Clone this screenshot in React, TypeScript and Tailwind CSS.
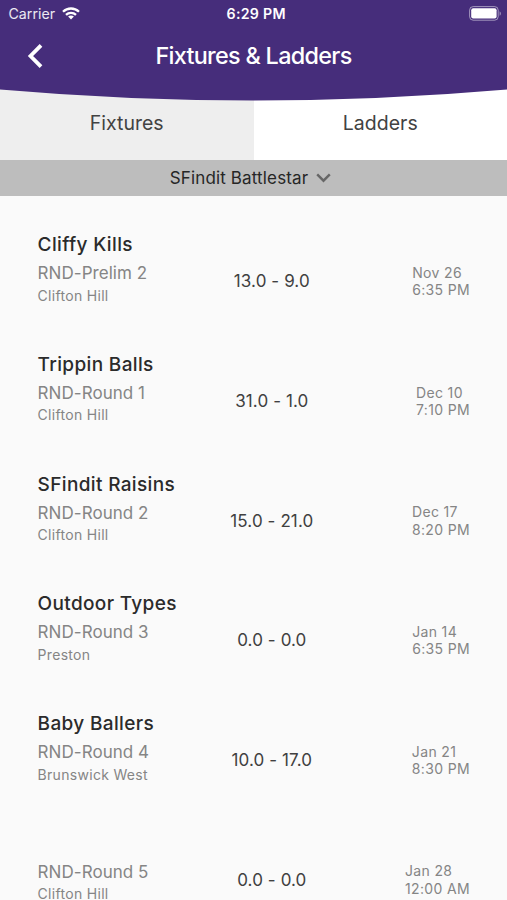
interface Fixture {
  id: number;
  team: string;
  round: string;
  venue: string;
  score: string;
  date: string;
  time: string;
}

const fixtures: Fixture[] = [
  { id: 1, team: 'Cliffy Kills', round: 'Prelim 2', venue: 'Clifton Hill', score: '13.0 - 9.0', date: 'Nov 26', time: '6:35 PM' },
  { id: 2, team: 'Trippin Balls', round: 'Round 1', venue: 'Clifton Hill', score: '31.0 - 1.0', date: 'Dec 10', time: '7:10 PM' },
  { id: 3, team: 'SFindit Raisins', round: 'Round 2', venue: 'Clifton Hill', score: '15.0 - 21.0', date: 'Dec 17', time: '8:20 PM' },
  { id: 4, team: 'Outdoor Types', round: 'Round 3', venue: 'Preston', score: '0.0 - 0.0', date: 'Jan 14', time: '6:35 PM' },
  { id: 5, team: 'Baby Ballers', round: 'Round 4', venue: 'Brunswick West', score: '10.0 - 17.0', date: 'Jan 21', time: '8:30 PM' },
  { id: 6, team: '', round: 'Round 5', venue: 'Clifton Hill', score: '0.0 - 0.0', date: 'Jan 28', time: '12:00 AM' },
];

function StatusBar() {
  return (
    <div className="grid h-7 grid-cols-3 items-center pl-[8.5px] pr-[5px] text-white">
      <div className="flex items-center gap-[7px]">
        <span className="text-[14.2px] text-white/90">Carrier</span>
        <svg className="-mt-px" width="18" height="13" viewBox="0 0 18 13" fill="none" stroke="currentColor" strokeWidth="2.3">
          <path d="M1 4.8C5.5 0.4 12.5 0.4 17 4.8" />
          <path d="M4 7.8C6.8 5.1 11.2 5.1 14 7.8" />
          <path d="M9 12.4L6.1 9.6C7.7 8.2 10.3 8.2 11.9 9.6Z" fill="currentColor" stroke="none" />
        </svg>
      </div>
      <span className="pl-0.5 text-center text-[14.2px] font-semibold tracking-[0.3px]">6:29 PM</span>
      <svg className="-mt-[2px] justify-self-end" width="33" height="15" viewBox="0 0 33 15" fill="none">
        <rect x="0.6" y="0.6" width="28.6" height="13.6" rx="3.6" stroke="white" strokeOpacity="0.5" />
        <rect x="2.2" y="2.2" width="25.4" height="10.4" rx="2" fill="white" />
        <path d="M30.6 5.2V9.8C32.3 9 32.3 6 30.6 5.2Z" fill="white" fillOpacity="0.5" />
      </svg>
    </div>
  );
}

function Header() {
  return (
    <header className="relative z-10 h-[101px]">
      {/* curved background */}
      <svg className="absolute inset-0" width="507" height="101" viewBox="0 0 507 101">
        <path d="M0 0H507V89.5Q253.5 111.5 0 89.5Z" fill="#462d7b" />
      </svg>
      <div className="relative">
        <StatusBar />
        <div className="grid h-14 grid-cols-[71px_1fr_71px] items-center">
          <button className="flex justify-center text-white">
            <svg width="18" height="26" viewBox="0 0 18 26" fill="none" stroke="currentColor" strokeWidth="3.8">
              <path d="M14 2.4L3.5 13L14 23.6" />
            </svg>
          </button>
          <h1 className="text-center text-[23.4px] font-medium tracking-[-0.7px] text-white">Fixtures &amp; Ladders</h1>
        </div>
      </div>
    </header>
  );
}

function FixtureRow({ fixture }: { fixture: Fixture }) {
  return (
    <li className="grid h-[119.7px] grid-cols-[164px_1fr_128px] items-center pr-[37px] pl-[37.6px]">
      <div className="pb-[30px]">
        <div className="h-[30px] text-[19px] leading-[30px] font-medium tracking-[0.35px] text-[#2b2b2b]">{fixture.team}</div>
        <div className="h-[27.5px] text-[17px] leading-[27.5px] tracking-[0.05px] text-[#858585]">RND-{fixture.round}</div>
        <div className="h-4 text-[14px] leading-4 tracking-[0.3px] text-[#858585]">{fixture.venue}</div>
      </div>
      <div className="text-center text-[17px] tracking-[0.1px] whitespace-nowrap text-[#404040]">{fixture.score}</div>
      <div className="flex justify-end pb-[1.5px]">
        <div className="text-[14px] leading-[17.4px] tracking-[0.35px] text-[#858585]">
          <div>{fixture.date}</div>
          <div>{fixture.time}</div>
        </div>
      </div>
    </li>
  );
}

export default function App() {
  return (
    <div className="h-[900px] w-[507px] overflow-hidden bg-[#fafafa] font-['Inter',sans-serif]">
      <Header />
      <div className="-mt-[15px] grid h-[73.5px] grid-cols-2 text-[19.5px] text-[#424242]">
        <button className="bg-[#eeeeee] pt-0.5">Fixtures</button>
        <button className="bg-white pt-0.5">Ladders</button>
      </div>
      <button className="flex h-[36.5px] w-full items-center justify-center gap-2 bg-[#bdbdbd] pt-px pr-[6px] text-[17px] tracking-[0.15px] text-[#262626]">
        <span>SFindit Battlestar</span>
        <svg width="15" height="10" viewBox="0 0 15 10" fill="none" stroke="#666666" strokeWidth="2.4">
          <path d="M1.2 1.4L7.5 7.7L13.8 1.4" />
        </svg>
      </button>
      <ul className="pt-[26.2px]">
        {fixtures.map((fixture) => (
          <FixtureRow key={fixture.id} fixture={fixture} />
        ))}
      </ul>
    </div>
  );
}
